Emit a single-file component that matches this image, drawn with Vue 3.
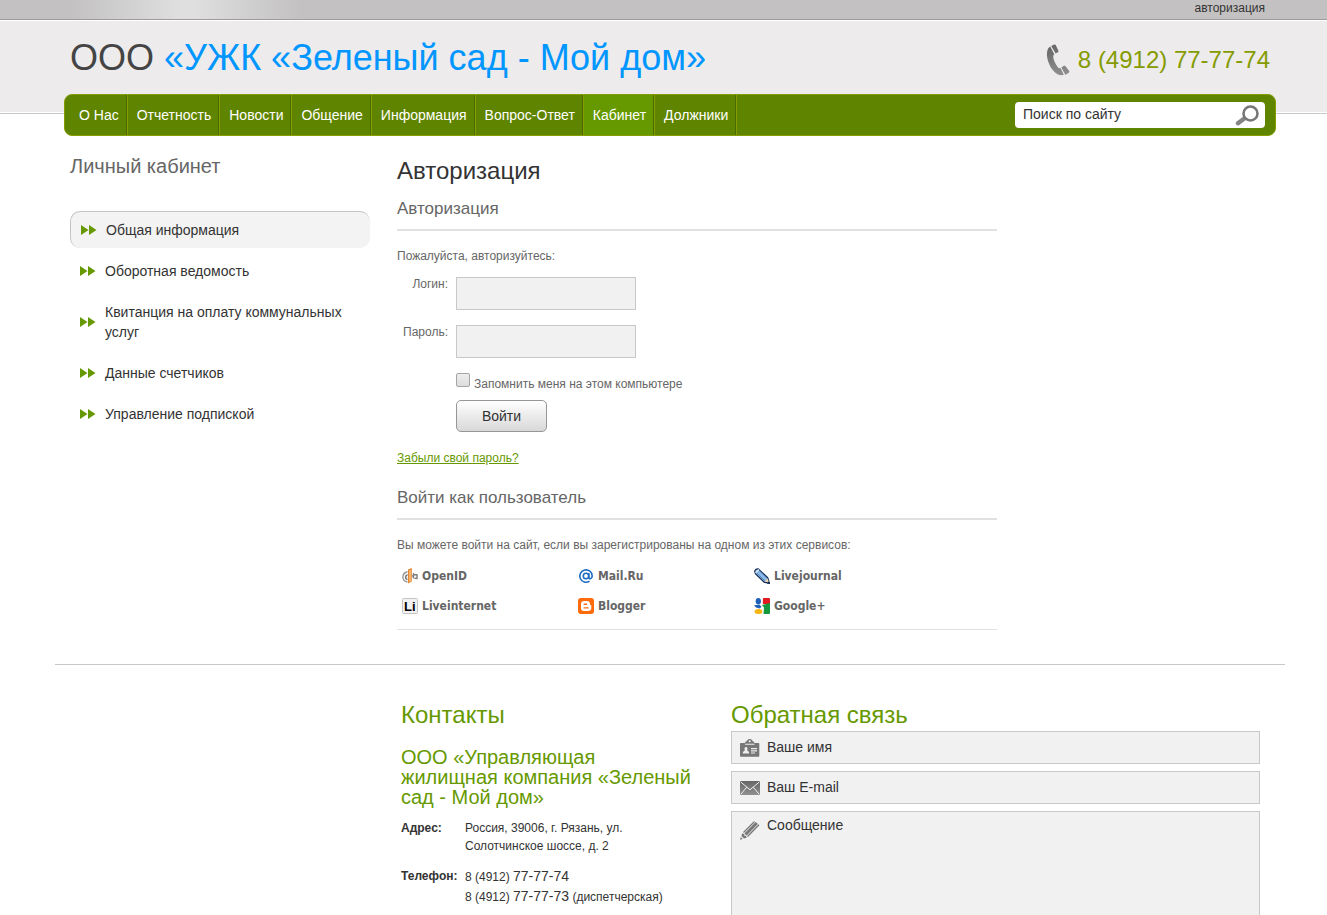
<script setup>
const nav = ['О Нас', 'Отчетность', 'Новости', 'Общение', 'Информация', 'Вопрос-Ответ', 'Кабинет', 'Должники']
const side = [
  'Общая информация',
  'Оборотная ведомость',
  'Квитанция на оплату коммунальных услуг',
  'Данные счетчиков',
  'Управление подпиской',
]
const services = ['OpenID', 'Mail.Ru', 'Livejournal', 'Liveinternet', 'Blogger', 'Google+']
</script>

<template>
  <div class="page">
    <header class="header">
      <div class="topbar"><a href="#">авторизация</a></div>
      <div class="brand">
        <div class="title">ООО <span>«УЖК «Зеленый сад - Мой дом»</span></div>
        <div class="phone">
          <svg width="24" height="32" viewBox="0 0 24 32" aria-hidden="true">
            <defs>
              <linearGradient id="steel" x1="0" y1="0" x2="0" y2="1">
                <stop offset="0" stop-color="#666" />
                <stop offset="1" stop-color="#909090" />
              </linearGradient>
            </defs>
            <path fill="url(#steel)" d="M4.200 2.600C1.500 4 .8 8 1 12c.8 8 5.500 15.500 11 18.600 2.200 1 4.700.8 5.800.2l-3.200-6.800c-1 .5-2 .2-2.800-.7C9.300 20 7.200 15.500 7.200 12.600c0-1 .4-1.700 1.200-2z" />
            <path fill="url(#steel)" d="M5.200 1.900 8.300.6c.7-.2 1.200 0 1.500.6l2.600 5.600c.3.6 0 1.200-.5 1.500l-2.300 1.200zM15.400 23.400l2.400-1.600c.6-.3 1.200-.2 1.500.3l3.900 4.800c.4.6.3 1.200-.2 1.600l-3.600 2.600z" />
          </svg>
          <span>8 (4912) 77-77-74</span>
        </div>
      </div>
    </header>

    <nav class="menu">
      <ul>
        <li v-for="n in nav" :key="n" :class="{ active: n === 'Кабинет' }"><a href="#">{{ n }}</a></li>
      </ul>
      <form class="search" @submit.prevent>
        <input type="text" placeholder="Поиск по сайту" aria-label="Поиск по сайту" />
        <button type="submit" aria-label="Найти">
          <svg width="26" height="22" viewBox="0 0 26 22">
            <path d="M10 14 3 19.200" stroke="#858585" stroke-width="4.400" stroke-linecap="round" />
            <circle cx="15.500" cy="9.500" r="7" fill="#fff" stroke="#777" stroke-width="2.600" />
          </svg>
        </button>
      </form>
    </nav>

    <div class="columns">
      <aside class="side">
        <h2>Личный кабинет</h2>
        <ul>
          <li v-for="(s, i) in side" :key="s">
            <a href="#" :class="{ active: i === 0 }">
              <svg width="16" height="10" viewBox="0 0 16 10" aria-hidden="true">
                <path fill="#690" d="M0 0 7.500 5 0 10zM8 0l7.500 5L8 10z" />
              </svg>
              <span>{{ s }}</span>
            </a>
          </li>
        </ul>
      </aside>

      <main class="content">
        <h1>Авторизация</h1>
        <h2>Авторизация</h2>
        <p>Пожалуйста, авторизуйтесь:</p>
        <form class="login" @submit.prevent>
          <label for="login">Логин:</label>
          <input id="login" type="text" />
          <label for="pass">Пароль:</label>
          <input id="pass" type="password" />
          <div class="remember">
            <input id="remember" type="checkbox" />
            <label for="remember">Запомнить меня на этом компьютере</label>
          </div>
          <button type="submit">Войти</button>
        </form>
        <a class="forgot" href="#">Забыли свой пароль?</a>

        <h2>Войти как пользователь</h2>
        <p>Вы можете войти на сайт, если вы зарегистрированы на одном из этих сервисов:</p>
        <ul class="services">
          <li v-for="(s, i) in services" :key="s">
            <a href="#">
              <svg width="16" height="16" viewBox="0 0 16 16" aria-hidden="true">
                <g v-if="i === 0" fill="none">
                  <path d="M5.500 3.800C2.500 4.500.9 6.800.9 9.200c0 2.600 2 4.300 4.600 4.800" stroke="#999" stroke-width="1.400" />
                  <path d="M5.500 6.800C4.300 7.200 3.600 8.200 3.600 9.300c0 1.200.8 2 1.900 2.300" stroke="#777" stroke-width="1.600" />
                  <path d="M11.500 5v5.500M12 6.500l2.500.5M15 6v4.500l-2.500-.3M10 8h1.500" stroke="#808080" stroke-width="1.400" />
                  <path d="M6 1.500 9.800 0v13.500L6 15.500z" fill="#e8842a" />
                  <path d="M8 2v11.500" stroke="#ffc98c" stroke-width="1.400" />
                </g>
                <g v-else-if="i === 1" fill="none" stroke="#1c6cc2">
                  <circle cx="8" cy="8" r="2.700" stroke-width="1.600" />
                  <path d="M10.800 5v4.300c0 2.200 3.400 2 3.400-1.300a6.200 6.200 0 1 0-2.700 5.200" stroke-width="1.600" />
                </g>
                <g v-else-if="i === 2">
                  <path d="M.7 3.600C.7 1.900 2.400.6 4.200.8L13.700 9.700l1.700 5.700-5.300-1.200L1.600 6z" fill="#8ab9ea" stroke="#142c52" stroke-width="1.200" />
                  <path d="m3 5.200 8.300 8M5.400 2.800l8 7.800" stroke="#4d80bd" stroke-width=".8" />
                  <path d="m10.500 13.600 3.200-3.200 1 3.600z" fill="#f5d5a5" />
                  <path d="m13 15.400 2.500.3-.4-2.500z" fill="#142c52" />
                  <path d="M1.500 4.800 4.900 1.500" stroke="#dce8f5" stroke-width="1.200" />
                </g>
                <g v-else-if="i === 3">
                  <rect x=".5" y=".5" width="15" height="15" rx="1" fill="#f1f1f1" stroke="#c4c4c4" />
                  <text x="2" y="13" class="li-mark">Li</text>
                </g>
                <g v-else-if="i === 4">
                  <rect width="16" height="16" rx="3" fill="#ff6a0a" />
                  <path fill="#fff" fill-rule="evenodd" d="M6 3h3c2 0 3 1.300 3 3 0 .8.300 1 .8 1 .4 0 .5.200.5.600V10c0 2-1.300 3-3.200 3H6c-2 0-3-1.200-3-3V6c0-1.800 1.200-3 3-3zm.2 2.600a.7.700 0 0 0 0 1.400h2.400a.7.700 0 0 0 0-1.400zm0 3.600a.7.700 0 0 0 0 1.400h3.800a.7.700 0 0 0 0-1.400z" />
                </g>
                <g v-else>
                  <path fill="#e11b22" d="M8 0h7a1 1 0 0 1 1 1v5H9z" />
                  <path fill="#16983f" d="M8 7 16 5v10a1 1 0 0 1-1 1H8z" />
                  <path fill="#1c60b8" d="M0 7h7v4.500L0 9.500z" />
                  <path fill="#fff" d="M6 0h3.200l-.7 4-1 2.500L10 9.500 9.500 16H7L2 11.500 0 9.500V7.200z" />
                  <ellipse cx="4.300" cy="3.300" rx="2.600" ry="3.300" fill="#1c60b8" />
                  <path fill="#1c60b8" d="M0 7.200 5.500 6.700l2 2L5.700 10.500 2 9.500z" />
                  <ellipse cx="4.500" cy="13.500" rx="3.900" ry="2.500" fill="#f5b50f" />
                </g>
              </svg>
              <span>{{ s }}</span>
            </a>
          </li>
        </ul>
      </main>
    </div>

    <footer class="footer">
      <section class="contacts">
        <h2>Контакты</h2>
        <h3>ООО «Управляющая жилищная компания «Зеленый сад - Мой дом»</h3>
        <dl>
          <dt>Адрес:</dt>
          <dd>Россия, 39006, г. Рязань, ул. Солотчинское шоссе, д. 2</dd>
          <dt>Телефон:</dt>
          <dd class="phones">
            <div>8 (4912) <span>77-77-74</span></div>
            <div>8 (4912) <span>77-77-73</span> (диспетчерская)</div>
          </dd>
        </dl>
      </section>

      <form class="feedback" @submit.prevent>
        <h2>Обратная связь</h2>
        <div class="field">
          <svg width="20" height="18" viewBox="0 0 20 18" aria-hidden="true">
            <path fill="#777" fill-rule="evenodd" d="M6 2.500C7 2.500 7.300 0 9.700 0s2.700 2.500 3.700 2.500c.7 0 1 .8.9 1.500H18.500c.5 0 .8.400.8.800v12c0 .6-.4 1-1 1H1c-.6 0-1-.4-1-1v-12C0 4.300.3 4 .8 4h4.300c-.1-.7.2-1.500.9-1.500zM9.700 1.300a1 1 0 1 0 .1 0z" />
            <path fill="#eee" d="M5 4.800h9.500v.9H5zM2.800 14.500c0-2 1-2.600 2.200-3-1-2-.4-3.600 1-3.600s2 1.600 1 3.600c1.200.4 2.200 1 2.200 3zM11 9h6v1.200h-6zM11 11.300h6v1.100h-6zM11 13.500h4v1h-4z" />
          </svg>
          <input type="text" placeholder="Ваше имя" aria-label="Ваше имя" />
        </div>
        <div class="field">
          <svg width="20" height="14" viewBox="0 0 20 14" aria-hidden="true">
            <rect width="20" height="14" fill="url(#steel)" />
            <path d="m.5.8 9.500 8 9.500-8M.8 13.300l6-7.200M19.200 13.300l-6-7.200" fill="none" stroke="#eee" stroke-width="1" />
          </svg>
          <input type="email" placeholder="Ваш E-mail" aria-label="Ваш E-mail" />
        </div>
        <div class="field message">
          <svg width="20" height="20" viewBox="0 0 20 20" aria-hidden="true">
            <path d="M3.500 12.500 14.500 1.500M7.500 16.500 19 4.800" stroke="#777" stroke-width="1.300" />
            <path d="M5.500 14.500 16.800 3" stroke="#777" stroke-width="3" />
            <path d="M2 13.500 1.500 16l2.500 2.500 2.700-.8-.6-1.700-1.600-.3-.4-1.800zM.8 17 0 19.800l2.700-.8z" fill="#777" />
          </svg>
          <textarea rows="8" placeholder="Сообщение" aria-label="Сообщение"></textarea>
        </div>
      </form>
    </footer>
  </div>
</template>

<style>
html {
  scrollbar-width: none;
}
body {
  background: #fff;
}
</style>

<style scoped>
.page {
  font-family: "Liberation Sans", Arial, sans-serif;
  font-size: 12px;
  line-height: 18px;
  color: #333;
}
.page * {
  box-sizing: border-box;
}
h1, h2, h3, p, ul, dl, dd {
  margin: 0;
  padding: 0;
  font-weight: normal;
}
ul {
  list-style: none;
}
a {
  color: inherit;
  text-decoration: none;
}
input, textarea, button {
  font-family: inherit;
  font-size: 14px;
  color: #333;
  margin: 0;
}
input::placeholder, textarea::placeholder {
  color: #333;
  opacity: 1;
}
svg {
  flex: none;
}

.header {
  height: 114px;
  background: #edebec;
  border-bottom: 1px solid #c8c8c8;
  box-shadow: inset 0 -1px #fff;
}
.topbar {
  height: 20px;
  background: linear-gradient(90deg, #c3c1c2 70px, #dfdfdf 180px, #dfdfdf 195px, #c3c1c2 300px);
  border-bottom: 1px solid #9c9a9b;
  box-shadow: 0 1px #fff;
  padding-right: 62px;
  text-align: right;
  line-height: 16px;
}
.brand {
  display: flex;
  justify-content: space-between;
  padding: 17px 57px 0 70px;
}
.title {
  font-size: 36px;
  line-height: 42px;
  color: #444;
}
.title span {
  color: #0096ff;
}
.phone {
  display: flex;
  align-items: center;
  gap: 8px;
  font-size: 24px;
  line-height: 46px;
  color: #859b00;
}

.menu {
  display: flex;
  justify-content: space-between;
  align-items: center;
  height: 42px;
  margin: -20px 51px 0 64px;
  padding: 0 10px 0 5px;
  position: relative;
  background: #5f8500;
  border: 1px solid #859d00;
  border-radius: 8px;
}
.menu ul {
  display: flex;
  height: 100%;
}
.menu li {
  border-right: 1px solid #859d00;
}
.menu a {
  display: block;
  padding: 0 7px 0 9px;
  font-size: 14px;
  line-height: 40px;
  color: #fff;
  border-right: 1px solid #4b6a00;
}
.menu .active a {
  background: #690;
}
.search {
  display: flex;
  align-items: center;
  width: 250px;
  height: 26px;
  background: #fff;
  border-radius: 4px;
}
.search input {
  flex: 1;
  min-width: 0;
  padding: 0 8px 2px;
  border: 0;
  background: none;
}
.search button {
  display: flex;
  padding: 0 4px 0 0;
  border: 0;
  background: none;
}

.columns {
  display: flex;
  gap: 27px;
  margin: 0 42px 0 55px;
  padding: 20px 15px 34px;
  border-bottom: 1px solid #c8c8c8;
}
.side {
  width: 300px;
}
.side h2 {
  margin-bottom: 35px;
  font-size: 20px;
  line-height: 20px;
  color: #666;
}
.side ul {
  display: grid;
  row-gap: 5px;
}
.side a {
  display: flex;
  align-items: center;
  gap: 9px;
  padding: 8px 10px;
  font-size: 14px;
  line-height: 20px;
}
.side a.active {
  background: #f3f3f3;
  border: solid #c4c4c4;
  border-width: 1px 0 0 1px;
  border-radius: 10px;
}

.content {
  width: 600px;
  color: #666;
}
.content h1 {
  margin-bottom: 13px;
  font-size: 24px;
  line-height: 30px;
  color: #333;
}
.content h2 {
  margin-bottom: 16px;
  padding-bottom: 10px;
  border-bottom: 2px solid #e1e1e1;
  font-size: 17px;
  line-height: 20px;
}
.login {
  display: grid;
  grid-template-columns: 51px auto;
  justify-content: start;
  justify-items: start;
  column-gap: 8px;
  row-gap: 15px;
  padding-top: 12px;
}
.login > label {
  justify-self: end;
  line-height: 14px;
}
.login > input {
  width: 180px;
  height: 33px;
  padding: 0 8px;
  border: 1px solid #c8c8c8;
  background: #f1f1f1;
}
.remember {
  grid-column: 2;
  display: flex;
  gap: 4px;
}
.remember input {
  appearance: none;
  width: 14px;
  height: 14px;
  border: 1px solid #a5a5a5;
  border-radius: 2px;
  background: linear-gradient(#eee, #dcdcdc);
}
.remember label {
  padding-top: 2px;
}
.login button {
  grid-column: 2;
  width: 91px;
  height: 32px;
  margin-top: -8px;
  border: 1px solid #969696;
  border-radius: 5px;
  background: linear-gradient(#fff, #d8d8d8);
}
.forgot {
  display: block;
  margin: 17px 0 21px;
  color: #690;
  text-decoration: underline;
}
.services {
  display: grid;
  grid-template-columns: repeat(3, 176px);
  row-gap: 14px;
  padding: 14px 5px 15px;
  border-bottom: 1px solid #e1e1e1;
  font-family: "DejaVu Sans Condensed", Tahoma, sans-serif;
  font-weight: bold;
  line-height: 16px;
}
.services a {
  display: flex;
  gap: 4px;
}
.li-mark {
  font: bold 13px "Liberation Sans", Arial, sans-serif;
  fill: #000;
}

.footer {
  display: grid;
  grid-template-columns: 290px 1fr;
  column-gap: 40px;
  margin: 35px 67px 0 401px;
}
.footer h2 {
  font-size: 24px;
  line-height: 30px;
  color: #690;
}
.footer h3 {
  margin: 17px 0 12px;
  font-size: 20px;
  line-height: 20px;
  color: #690;
}
dl {
  display: grid;
  grid-template-columns: 64px 180px;
  row-gap: 12px;
}
dt {
  font-weight: bold;
}
.phones {
  line-height: 20px;
  white-space: nowrap;
}
.phones span {
  font-size: 14px;
  line-height: 16px;
}
.feedback {
  padding-bottom: 30px;
}
.feedback h2 {
  margin-bottom: 1px;
}
.field {
  display: flex;
  align-items: center;
  gap: 7px;
  margin-bottom: 7px;
  padding-left: 8px;
  border: 1px solid #c8c8c8;
  background: #f1f1f1;
}
.field input, .field textarea {
  flex: 1;
  min-width: 0;
  border: 0;
  background: none;
  resize: none;
}
.field input {
  height: 31px;
  padding: 0 0 2px;
}
.field textarea {
  padding: 3px 0;
  line-height: 20px;
}
.message {
  align-items: flex-start;
}
.message svg {
  margin-top: 8px;
}
</style>
